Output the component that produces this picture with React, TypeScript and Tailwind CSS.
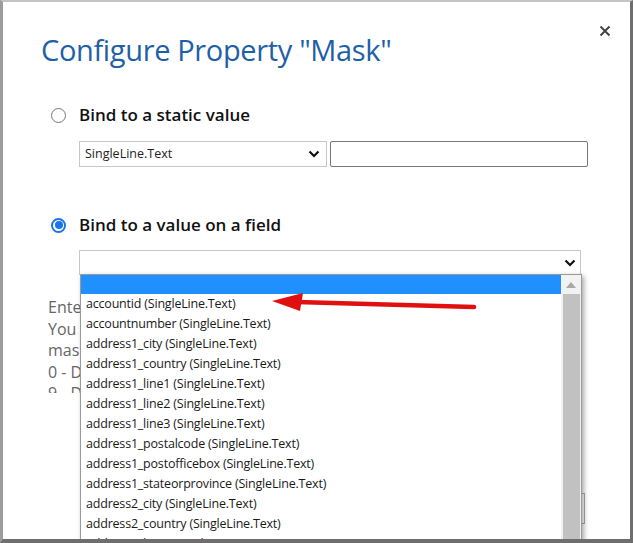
import React from 'react';

const fields = [
  'accountid',
  'accountnumber',
  'address1_city',
  'address1_country',
  'address1_line1',
  'address1_line2',
  'address1_line3',
  'address1_postalcode',
  'address1_postofficebox',
  'address1_stateorprovince',
  'address2_city',
  'address2_country',
  'address2_line1',
];

const Chevron = () => (
  <svg width="12" height="8" viewBox="0 0 12 8" className="shrink-0">
    <path d="M1.5 1.5 L6 6 L10.5 1.5" fill="none" stroke="#111" strokeWidth="2.2" />
  </svg>
);

const Radio = ({ checked }: { checked?: boolean }) =>
  checked ? (
    <span className="flex h-[15px] w-[15px] items-center justify-center rounded-full border-2 border-[#1a73e8] bg-white">
      <span className="h-[8px] w-[8px] rounded-full bg-[#1a73e8]" />
    </span>
  ) : (
    <span className="h-[15px] w-[15px] rounded-full border border-[#777] bg-white" />
  );

const App = () => {
  return (
    <div
      className="relative h-[543px] w-[633px] overflow-hidden border-t-2 border-l-[3px] border-r-[3px] border-b-[4px] border-t-[#c4c4c4] border-l-[#9c9c9c] border-r-[#6e6e6e] border-b-[#6e6e6e] bg-white"
      style={{ fontFamily: '"Open Sans", "Noto Sans", sans-serif' }}
    >
      {/* close */}
      <button className="absolute right-[19px] top-[23px]">
        <svg width="12" height="12" viewBox="0 0 12 12">
          <path d="M1.5 1.5 L10.5 10.5 M10.5 1.5 L1.5 10.5" stroke="#444" strokeWidth="2" />
        </svg>
      </button>

      <div className="pl-[38px] pt-[30px]">
        <h1 className="text-[29px] font-normal leading-[36px] tracking-[-0.35px] text-[#1f5fa6]">
          Configure Property "Mask"
        </h1>

        {/* static value */}
        <div className="mt-[35px] flex items-center gap-[13px] pl-[10px]">
          <Radio />
          <span className="text-[17px] font-semibold leading-[24px] text-[#111]">Bind to a static value</span>
        </div>
        <div className="mt-[14px] flex items-center gap-[3px] pl-[38px]">
          <div className="flex h-[26px] w-[248px] items-center justify-between border border-[#c8c8c8] pl-[5px] pr-[6px] text-[12.5px] text-[#222]">
            <span>SingleLine.Text</span>
            <Chevron />
          </div>
          <div className="h-[26px] w-[258px] rounded-[2px] border border-[#777]" />
        </div>

        {/* field value */}
        <div className="mt-[46px] flex items-center gap-[13px] pl-[10px]">
          <Radio checked />
          <span className="text-[17px] font-semibold leading-[24px] text-[#111]">Bind to a value on a field</span>
        </div>
        <div className="mt-[13px] pl-[38px]">
          <div className="flex h-[25px] w-[502px] items-center justify-end border border-[#c8c8c8] pr-[4px]">
            <Chevron />
          </div>
        </div>

        {/* help text (clipped) */}
        <div className="mt-[22px] h-[96px] overflow-hidden pl-[7px] text-[16px] leading-[21.5px] text-[#666]">
          <p>Enter a mask for the text input.</p>
          <p>You can use these characters in the</p>
          <p>mask:</p>
          <p>0 - Digit</p>
          <p>9 - Digit or space</p>
        </div>

        <div className="mt-[100px] flex justify-end pr-[45px]">
          <button className="h-[31px] w-[80px] border border-[#aaa] bg-white text-[14px] text-[#333]">OK</button>
        </div>
      </div>

      {/* open listbox */}
      <div className="absolute left-[77px] top-[272px] flex h-[280px] w-[502px] border border-[#9a9a9a] bg-white shadow-[2px_2px_5px_rgba(0,0,0,0.35)]">
        <div className="flex-1">
          <div className="h-[19px] bg-[#2190ff]" />
          {fields.map((f) => (
            <div key={f} className="h-[20px] pl-[5px] text-[12.5px] leading-[20px] tracking-[-0.2px] text-[#1a1a1a]">
              {f} (SingleLine.Text)
            </div>
          ))}
        </div>
        <div className="flex w-[20px] flex-col items-center bg-[#f2f2f2]">
          <svg width="10" height="6" viewBox="0 0 10 6" className="mt-[7px]">
            <path d="M0 6 L5 0 L10 6 Z" fill="#a8a8a8" />
          </svg>
          <div className="mt-[6px] w-[17px] flex-1 bg-[#c1c1c1]" />
        </div>
      </div>

      {/* red arrow annotation */}
      <svg className="absolute left-[266px] top-[289px]" width="215" height="26" viewBox="0 0 215 26">
        <path d="M28 11 L205 16" stroke="#e01010" strokeWidth="4.5" strokeLinecap="round" />
        <path d="M3 10 L34 2 L31 20 Z" fill="#e01010" />
      </svg>
    </div>
  );
};

export default App;
